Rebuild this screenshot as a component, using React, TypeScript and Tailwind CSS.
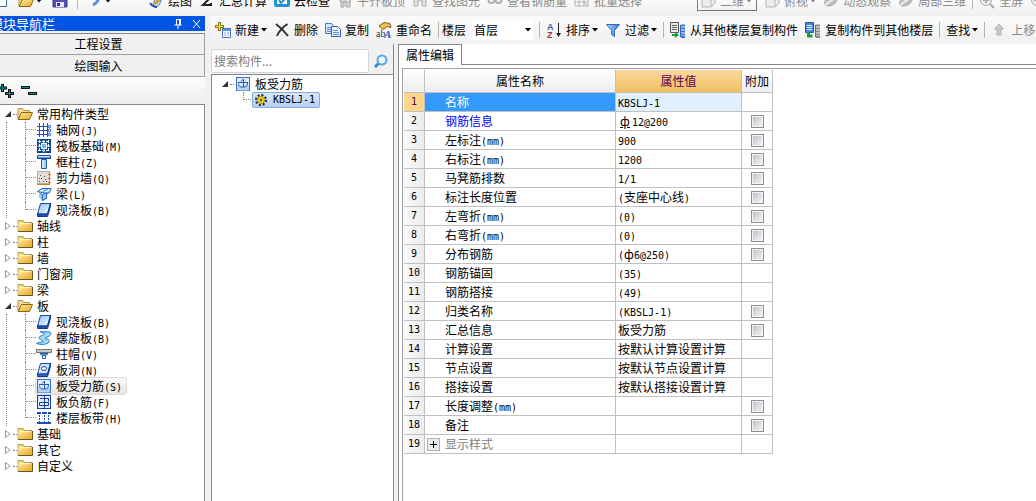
import React from "react";
import clsx from "clsx";

const ICONS: Record<string, React.ReactNode> = {
    folder: (
        <>
            <path d="M1 13.5V2.5h5l1 2h8v9z" fill="#f7d774" stroke="#c09c48" />
            <path d="M1.500 6h13v7h-13z" fill="url(#folderFill)" />
            <path d="M2 5.500h12" stroke="#fff3c0" />
            <path d="M1 13.500h14.500V5" fill="none" stroke="#6d5420" />
        </>
    ),
    folderOpen: (
        <>
            <path d="M1 13V2.500h4.500l1 2h6V7" fill="#f4dc94" stroke="#b8923e" />
            <path d="M1 13.500 4.500 6.500h11l-3 7z" fill="url(#folderFill)" stroke="#8a6418" />
        </>
    ),
    axis: (
        <>
            <path d="M3.500 1v14M7.500 1v14M11.500 1v14M1 4.500h13M1 8.500h13M1 12.500h13" stroke="#1f4fc0" fill="none" />
            <g fill="#fff" stroke="#1f4fc0">
                <circle cx="13.500" cy="4.500" r="1.300" />
                <circle cx="13.500" cy="8.500" r="1.300" />
                <circle cx="13.500" cy="12.500" r="1.300" />
            </g>
        </>
    ),
    raft: (
        <>
            <rect x="1" y="1" width="14" height="14" fill="#0b4a94" />
            <path d="M3.500 2v12M12.500 2v12M2 3.500h12M2 12.500h12" stroke="#fff" strokeDasharray="3 1" />
            <rect x="5.500" y="5.500" width="5" height="5" fill="#7db4ec" stroke="#fff" />
            <path d="M8 2v3M8 11v3M2 8h3M11 8h3" stroke="#fff" />
        </>
    ),
    column: (
        <>
            <path d="M1.500 1.500h13v3h-13z" fill="#5790dc" stroke="#1d4690" />
            <path d="M2 2.500h12" stroke="#d4e7fb" />
            <path d="M5.500 5.500h5v9h-5z" fill="#a5cbf5" stroke="#2158ad" />
            <path d="M7 6v8" stroke="#fff" />
        </>
    ),
    shearWall: (
        <>
            <rect x="1.500" y="1.500" width="12" height="12" fill="#e4dedb" stroke="#b8aca6" />
            <path d="M3 11.500h1M5 8.500h1M7 11.500h1M9 9.500h1M4 5.500h1M8 6.500h1M10 11.500h1M3 8.500h1" stroke="#555" />
            <path d="M1 14.500h13M13.500 2v12M12 4.500h3M12 8.500h3M12 12.500h3" stroke="#d9792b" />
        </>
    ),
    beam: (
        <>
            <path d="M1.500 5.500 6 2.500h9l-1 3-3.500 2z" fill="#d4eafd" stroke="#2468b8" />
            <path d="M6.500 8.500 10.500 6.500v6l-4 2z" fill="#8cc0f2" stroke="#2468b8" />
            <path d="m2 5.500 4 3v5l-2-2V8M7 5.500l5-2.500M11 8l3-2" fill="none" stroke="#3f88d4" />
        </>
    ),
    slab: (
        <>
            <path d="M4.500 1.500h10l-3 10.500h-10z" fill="url(#slabFill)" stroke="#1746a8" />
            <path d="M1.500 12v2.500h10l3-10v-3l-3 10.500z" fill="#1b52bd" stroke="#123c92" />
        </>
    ),
    spiral: (
        <path
            d="M4 1.500c3 1 7-.500 10 .500 2 2 0 4-3 5-3 1-3 1.500 0 2 3 .800 3 3 0 4.500-3 1.500-7 1-10.500 0C2 12 5 13 7 11.500c1-1-3-1.500-4-3.500-.500-2 4-2 5.500-4C8.500 3 6 3 4 1.500z"
            fill="#a4daf6"
            stroke="#1f7cc4"
        />
    ),
    cap: (
        <>
            <path d="M.500 3.500h15v3H.500z" fill="#c9c9c9" stroke="#777" />
            <path d="M4 7.500h8l-2 2H6z" fill="#6ca4e8" stroke="#1d55a8" />
            <path d="M6.500 9.500h3v3h-3z" fill="#fff" stroke="#1d55a8" />
        </>
    ),
    hole: (
        <>
            <path d="M4.500 1.500h10l-3 10.500h-10z" fill="#cfe6fc" stroke="#1746a8" />
            <path d="M1.500 12v2.500h10l3-10v-3l-3 10.500z" fill="#2a66cf" stroke="#123c92" />
            <ellipse cx="8" cy="6.500" rx="2.500" ry="2" fill="#fff" stroke="#1746a8" />
        </>
    ),
    rebar: (
        <>
            <rect x="1.500" y="1.500" width="13" height="13" fill="#dcecfc" stroke="#3c6cc0" />
            <path d="M2 9.500h12v5H2z" fill="#b4d2f4" />
            <path d="M3 6.500h10M8.500 3v8c-3 1-5-1-5-3.500M6 5.500l2.500-2.500M12.500 7c0 3-1.500 4-4 4" fill="none" stroke="#2458b4" />
        </>
    ),
    negRebar: (
        <>
            <rect x="1.500" y="1.500" width="13" height="13" fill="#dcecfc" stroke="#1b3f9c" />
            <path d="M8.500 2v12M4 4.500h8.500v3M3.500 8.500h9v3h-9z" stroke="#1b3f9c" fill="none" />
        </>
    ),
    strip: (
        <>
            <path d="M1 3h4M6 3h5M12 3h3M1 13h14" stroke="#1b4fb8" strokeWidth="2" />
            <path d="M3.500 5v7M8.500 5v7M12.500 5v7" stroke="#1b4fb8" strokeDasharray="2 1" />
        </>
    ),
    gear: (
        <>
            <circle cx="8" cy="8" r="5" fill="none" stroke="#222" strokeWidth="2" strokeDasharray="2 1.900" />
            <circle cx="8" cy="8" r="3.500" fill="#f8e21c" stroke="#a08c00" />
            <circle cx="8" cy="8" r="1" fill="#fff" stroke="#333" />
        </>
    ),
    add: (
        <>
            <path d="M4.500 0v9M0 4.500h9" stroke="#8c7a18" strokeWidth="3" />
            <path d="M4.500 1v7M1 4.500h7" stroke="#ffe34a" />
            <path d="M7.500 6.500h8v9h-8z" fill="#fff" stroke="#4575c8" />
            <path d="M8 8h7" stroke="#5c94e8" strokeWidth="2" />
            <path d="M9 11h2M12 11h2M9 13h2M12 13h2" stroke="#7ca6e6" />
        </>
    ),
    remove: <path d="M2 2c4 3 8 7 12 12M13.500 2C9 5 5 9 3 14" fill="none" stroke="#333" strokeWidth="2" />,
    copy: (
        <>
            <path d="M.500 1.500h6l2 2v8h-8z" fill="#d6e6fb" stroke="#4a78c8" />
            <path d="M2 5.500h5M2 7.500h5M2 9.500h4" stroke="#5b8be0" />
            <path d="M6.500 4.500h6l3 3v7h-9z" fill="#eef5ff" stroke="#365fae" />
            <path d="M8 8.500h5M8 10.500h6M8 12.500h6" stroke="#5b8be0" />
        </>
    ),
    rename: (
        <>
            <path d="m3 4 5-3.500 6 1 1 4-4-1-4 3z" fill="#f0c34c" stroke="#7a6128" />
            <text x="0" y="15" fontSize="10" fill="#333" fontFamily="Liberation Serif, serif">ab</text>
            <text x="8" y="15.500" fontSize="11" fontWeight="bold" fontStyle="italic" fill="#2c5fb8" fontFamily="Liberation Serif, serif">A</text>
        </>
    ),
    sort: (
        <>
            <text x="1" y="7.500" fontSize="9" fontWeight="bold" fill="#2f5fb0" fontFamily="Liberation Sans, sans-serif">A</text>
            <text x="1" y="15.500" fontSize="9" fontWeight="bold" fill="#a03030" fontFamily="Liberation Sans, sans-serif">Z</text>
            <path d="M12.500 1v12" stroke="#222" />
            <path d="M10 11h5l-2.500 4z" fill="#222" />
        </>
    ),
    filter: <path d="M1.500 2.500h13L9.500 8.500v6l-3-2v-4z" fill="url(#funnelFill)" stroke="#2f68bc" />,
    copyFrom: (
        <>
            <path d="M.500.500h8v10h-8z" fill="#e8e8e8" stroke="#555" />
            <path d="M2 3.500h5M2 5.500h5M2 7.500h5" stroke="#666" />
            <path d="M10.500 3v12" stroke="#2c68c0" />
            <path d="M11 3.500h4M11 6.500h4M11 9.500h4M11 12.500h4M11 15h4" stroke="#3c78cc" strokeWidth="2" />
            <path d="M2 12h3v-2l4 3-4 3v-2H2z" fill="#1c9c38" />
        </>
    ),
    copyTo: (
        <>
            <path d="M.500.500h8v10h-8z" fill="#4f86dc" stroke="#2c55a0" />
            <path d="M2 3.500h5M2 5.500h5M2 7.500h5" stroke="#dce9fb" />
            <path d="M10.500 3v12" stroke="#666" />
            <path d="M11 3.500h4M11 6.500h4M11 9.500h4M11 12.500h4M11 15h4" stroke="#8a8a8a" strokeWidth="2" />
            <path d="M3.500 10v4h4" fill="none" stroke="#1c9c38" strokeWidth="3" />
        </>
    ),
    up: <path d="M8 2 3.500 7H6v6h4V7h2.500z" fill="#c8c8c8" stroke="#b0b0b0" />,
    page: <path d="M1.500 1.500h13v12h-13z" fill="#fff" stroke="#3c6c9c" />,
    save: (
        <>
            <path d="M1 1h14v13H1z" fill="#4f4fb4" stroke="#34348c" />
            <path d="M4 9h8v5H4z" fill="#e6e6f6" />
            <path d="M5 10h3v3H5z" fill="#34348c" />
        </>
    ),
    undo: <path d="M12 2c0 4-2 8-6 10" fill="none" stroke="#5b92e4" strokeWidth="3" />,
    brush: (
        <>
            <path d="M3 4c3 0 4 3 3 5s-1 4 2 5c4-1 4-5 6-9" fill="#c6e0f8" stroke="#3b6cae" />
            <path d="M7 11 14 3" stroke="#d39a2c" strokeWidth="3" />
            <path d="M2 10c2 3 4 4 7 4" stroke="#1f4fa0" strokeWidth="2" fill="none" />
        </>
    ),
    sum: <path d="M12 4V2H4l5 5-5 5h8v-2" fill="none" stroke="#222" strokeWidth="2" />,
    cloud: (
        <>
            <rect x="0" y="0" width="16" height="14" rx="2" fill="#2296d4" />
            <path d="M3 3h10v8H3z" fill="#fff" />
            <path d="m5 7 2 3 5-5" fill="none" stroke="#2296d4" strokeWidth="2" />
        </>
    ),
    align: <path d="M3 3h10v6H3zM4 9v5h3V9M9 7v7h4V7" fill="#d4d4d4" stroke="#a6a6a6" />,
    binoculars: <path d="M2 5h4v8H2zM10 5h4v8h-4zM6 8h4" fill="#e0e0e0" stroke="#b0b0b0" />,
    glasses: (
        <g fill="none" stroke="#b0b0b0" strokeWidth="2">
            <circle cx="4.500" cy="7" r="3" />
            <circle cx="11.500" cy="7" r="3" />
        </g>
    ),
    gridPick: <path d="M1 3h13v10H1zM1 9h13M5 3v10M10 3v10M9 8l5 6" fill="none" stroke="#b4b4b4" />,
    cube: <path d="M2 6 6 2h9v8l-4 4H2zM2 6h9v8M11 6l4-4" fill="#ececec" stroke="#b4b4b4" />,
    orbit: (
        <>
            <ellipse cx="8" cy="8" rx="7" ry="4" fill="#c0c0c0" stroke="#aaa" transform="rotate(-30 8 8)" />
            <path d="M2 12 13 4" stroke="#eee" strokeWidth="2" />
        </>
    ),
    magnify: (
        <>
            <circle cx="7" cy="7" r="5.500" fill="#eee" stroke="#aaa" />
            <path d="M4 7h6M7 4v6M11 11l4 4" stroke="#aaa" strokeWidth="2" />
        </>
    ),
};

function Icon({name, className}: { name: string, className?: string }) {
    return (
        <svg viewBox="0 0 16 16" className={clsx("size-4 shrink-0", className)} aria-hidden="true">
            {ICONS[name]}
        </svg>
    )
}

function Caret() {
    return (
        <svg viewBox="0 0 6 4" className="ml-[-2px] h-1 w-1.5 shrink-0" aria-hidden="true">
            <path d="M0 0h6L3 3.500z" fill="currentColor" />
        </svg>
    )
}

// CJK glyphs stay at 12px, latin runs get the half-width mono face
function Mixed({text}: { text: string }) {
    return (
        <>
            {text.split(/([\x21-\x7e]+)/).map((part, i) =>
                i % 2 ? <span key={i} className="font-['DejaVu_Sans_Mono',monospace] text-[10px] leading-none">{part}</span> : part
            )}
        </>
    )
}

function ToolButton({icon, label, caret, disabled}: { icon?: string, label?: string, caret?: boolean, disabled?: boolean }) {
    return (
        <button
            type="button"
            disabled={disabled}
            aria-label={label ?? icon}
            className="flex shrink-0 items-center gap-1 whitespace-nowrap text-black disabled:text-[#8a8a8a]"
        >
            {icon && <Icon name={icon} />}
            {label}
            {caret && <Caret />}
        </button>
    )
}

function Separator() {
    return <span className="-mx-px h-4 w-px shrink-0 bg-[#b4b4b4]" />
}

function TopBar() {
    return (
        <header className="h-4 overflow-hidden bg-linear-to-b from-[#fafafa] to-[#efefef]">
            <div className="-mt-[11px] flex h-6 items-center">
                <div className="flex w-[148px] shrink-0 items-center gap-2.5">
                    <Icon name="page" className="-ml-2" />
                    <ToolButton icon="folderOpen" caret />
                    <ToolButton icon="save" />
                    <Separator />
                    <ToolButton icon="undo" caret />
                </div>
                <div className="flex items-center gap-[7px]">
                    <ToolButton icon="brush" label="绘图" />
                    <ToolButton icon="sum" label="汇总计算" />
                    <ToolButton icon="cloud" label="云检查" />
                    <ToolButton icon="align" label="平齐板顶" disabled />
                    <ToolButton icon="binoculars" label="查找图元" disabled />
                    <ToolButton icon="glasses" label="查看钢筋量" disabled />
                    <ToolButton icon="gridPick" label="批量选择" disabled />
                    <div className="ml-12 flex h-5 w-[60px] shrink-0 items-center border border-[#777] px-0.5">
                        <ToolButton icon="cube" label="二维" caret disabled />
                    </div>
                    <ToolButton icon="cube" label="俯视" caret disabled />
                    <ToolButton icon="orbit" label="动态观察" disabled />
                    <ToolButton icon="orbit" label="局部三维" disabled />
                    <Separator />
                    <ToolButton icon="magnify" label="全屏" disabled />
                    <ToolButton icon="magnify" disabled />
                </div>
            </div>
        </header>
    )
}

function ComponentToolbar() {
    return (
        <div className="flex h-7 items-center gap-[7px] overflow-hidden bg-linear-to-b from-[#fafafa] to-[#f0f0f0] pl-1">
            <ToolButton icon="add" label="新建" caret />
            <ToolButton icon="remove" label="删除" />
            <ToolButton icon="copy" label="复制" />
            <ToolButton icon="rename" label="重命名" />
            <div className="flex shrink-0 items-center gap-1">
                <Separator />
                <label htmlFor="floor">楼层</label>
            </div>
            <div className="relative flex shrink-0 items-center">
                <select id="floor" className="h-5 w-[60px] appearance-none bg-white pl-px text-[12px]">
                    <option>首层</option>
                </select>
                <span className="pointer-events-none absolute right-0.5"><Caret /></span>
            </div>
            <Separator />
            <ToolButton icon="sort" label="排序" caret />
            <ToolButton icon="filter" label="过滤" caret />
            <Separator />
            <ToolButton icon="copyFrom" label="从其他楼层复制构件" />
            <ToolButton icon="copyTo" label="复制构件到其他楼层" />
            <Separator />
            <ToolButton label="查找" caret />
            <Separator />
            <ToolButton icon="up" label="上移" disabled />
        </div>
    )
}

type TreeNode = {
    label: string
    icon?: string
    active?: boolean
    children?: TreeNode[]
}

const MODULES: TreeNode[] = [
    {
        label: "常用构件类型",
        children: [
            {label: "轴网(J)", icon: "axis"},
            {label: "筏板基础(M)", icon: "raft"},
            {label: "框柱(Z)", icon: "column"},
            {label: "剪力墙(Q)", icon: "shearWall"},
            {label: "梁(L)", icon: "beam"},
            {label: "现浇板(B)", icon: "slab"},
        ],
    },
    {label: "轴线"},
    {label: "柱"},
    {label: "墙"},
    {label: "门窗洞"},
    {label: "梁"},
    {
        label: "板",
        children: [
            {label: "现浇板(B)", icon: "slab"},
            {label: "螺旋板(B)", icon: "spiral"},
            {label: "柱帽(V)", icon: "cap"},
            {label: "板洞(N)", icon: "hole"},
            {label: "板受力筋(S)", icon: "rebar", active: true},
            {label: "板负筋(F)", icon: "negRebar"},
            {label: "楼层板带(H)", icon: "strip"},
        ],
    },
    {label: "基础"},
    {label: "其它"},
    {label: "自定义"},
]

function Arrow({open}: { open?: boolean }) {
    return (
        <svg viewBox="0 0 8 8" className="size-2 shrink-0" aria-hidden="true">
            {open
                ? <path d="M7 1v6H1z" fill="#333" />
                : <path d="M1.500.500 6 4 1.500 7.500z" fill="#fff" stroke="#999" />}
        </svg>
    )
}

function ModuleTree() {
    return (
        <ul className="pt-px">
            {MODULES.map((node, i) => (
                <li key={i}>
                    <div className="flex h-4 items-center">
                        <Arrow open={!!node.children} />
                        <span className="mx-px w-1 border-t border-dotted border-[#888]" />
                        <Icon name={node.children ? "folderOpen" : "folder"} className="-ml-px" />
                        <span className="ml-1">{node.label}</span>
                    </div>
                    {node.children && (
                        <ul className="ml-0.5 border-l border-dotted border-[#888] pl-[18px]">
                            {node.children.map((child, j) => (
                                <li key={j} className="flex h-4 items-center">
                                    <span
                                        className={clsx(
                                            "w-[11px] self-stretch border-l border-dotted border-[#888]",
                                            j === node.children!.length - 1 && "mb-2"
                                        )}
                                    >
                                        <span className="block h-2 border-b border-dotted border-[#888]" />
                                    </span>
                                    <span
                                        className={clsx(
                                            "flex h-4 items-center gap-1 pr-1",
                                            child.active && "rounded-xs bg-linear-to-b from-[#fafafa] to-[#e6e6e6] outline outline-[#dadada]"
                                        )}
                                    >
                                        <Icon name={child.icon!} />
                                        <span><Mixed text={child.label} /></span>
                                    </span>
                                </li>
                            ))}
                        </ul>
                    )}
                </li>
            ))}
        </ul>
    )
}

function Sidebar() {
    return (
        <aside className="-ml-2 flex w-[213px] shrink-0 flex-col">
            <div className="flex h-[15px] items-center bg-[#0054e3] text-[13px] text-white">
                <span className="-ml-0.5 flex-1 whitespace-nowrap">模块导航栏</span>
                <svg viewBox="0 0 30 10" className="mr-1 h-2.5 w-[30px]" fill="none" stroke="#fff" aria-hidden="true">
                    <path d="M5 .500h4M5.500 0v6M8.500 0v6M3.500 6h7M7 6v4M9.500 0v6" />
                    <path d="m22 1 7 8M29 1l-7 8" />
                </svg>
            </div>
            <div className="flex flex-col pt-0.5">
                <button type="button" className="h-[22px] border border-[#a0a0a0] border-t-[#888] bg-[#f0f0f0]">工程设置</button>
                <button type="button" className="h-[22px] border border-t-0 border-[#a0a0a0] bg-[#f0f0f0]">绘图输入</button>
            </div>
            <div className="flex h-[27px] items-center bg-linear-to-b from-[#fdfdfd] to-[#ededed] pl-2">
                <svg viewBox="0 0 40 16" className="h-4 w-10" fill="none" aria-hidden="true">
                    <path d="M2.500 1v8M-2 5h9M9.500 6v9M5 10.500h9M21 4.500h9M28 10.500h9" stroke="#111" strokeWidth="3" />
                    <path d="M2.500 2v6M-1 5h7M9.500 7v7M6 10.500h7M22 4.500h7M29 10.500h7" stroke="#0c8f8c" />
                </svg>
            </div>
            <nav className="flex-1 border-t border-r border-[#828790] bg-white pl-3">
                <ModuleTree />
            </nav>
        </aside>
    )
}

function ComponentPanel() {
    return (
        <section className="flex w-[183px] shrink-0 flex-col border-r border-[#828790]">
            <div className="flex h-[30px] items-end pb-px">
                <input
                    type="text"
                    aria-label="搜索构件"
                    placeholder="搜索构件..."
                    className="h-6 min-w-0 flex-1 rounded-xs border border-[#d4d4dc] bg-white px-0.5 pb-0.5 text-[12px] placeholder:text-[#808080]"
                />
                <button type="button" aria-label="搜索" className="flex h-6 w-6 items-center justify-center">
                    <svg viewBox="0 0 16 16" className="size-4" fill="none" aria-hidden="true">
                        <path d="m6 10-4 4" stroke="#3a86c4" strokeWidth="3" />
                        <circle cx="9" cy="7" r="4.500" fill="#eaf6ff" stroke="#5aa8e0" strokeWidth="2" />
                    </svg>
                </button>
            </div>
            <div className="flex-1 border-t border-l border-[#828790] bg-white pt-px pl-[9px]">
                <div className="flex h-4 items-center">
                    <Arrow open />
                    <span className="mx-px w-1 border-t border-dotted border-[#888]" />
                    <Icon name="rebar" />
                    <span className="ml-1">板受力筋</span>
                </div>
                <div className="flex h-4 items-center pl-[22px]">
                    <span className="h-2 w-2 self-start border-b border-l border-dotted border-[#888]" />
                    <button type="button" className="ml-px flex h-4 items-center gap-1 rounded-xs border border-[#84acdd] bg-linear-to-b from-[#d9e8fb] to-[#b4d0f3] pr-1">
                        <Icon name="gear" />
                        <Mixed text="KBSLJ-1" />
                    </button>
                </div>
            </div>
        </section>
    )
}

type Row = {
    name: string
    value?: React.ReactNode
    check?: boolean
}

const ROWS: Row[] = [
    {name: "名称", value: <Mixed text="KBSLJ-1" />},
    {name: "钢筋信息", value: <><span className="inline-block w-3.5 text-center underline">ф</span><Mixed text="12@200" /></>, check: true},
    {name: "左标注(mm)", value: <Mixed text="900" />, check: true},
    {name: "右标注(mm)", value: <Mixed text="1200" />, check: true},
    {name: "马凳筋排数", value: <Mixed text="1/1" />, check: true},
    {name: "标注长度位置", value: <Mixed text="(支座中心线)" />, check: true},
    {name: "左弯折(mm)", value: <Mixed text="(0)" />, check: true},
    {name: "右弯折(mm)", value: <Mixed text="(0)" />, check: true},
    {name: "分布钢筋", value: <Mixed text="(ф6@250)" />, check: true},
    {name: "钢筋锚固", value: <Mixed text="(35)" />},
    {name: "钢筋搭接", value: <Mixed text="(49)" />},
    {name: "归类名称", value: <Mixed text="(KBSLJ-1)" />, check: true},
    {name: "汇总信息", value: "板受力筋", check: true},
    {name: "计算设置", value: "按默认计算设置计算"},
    {name: "节点设置", value: "按默认节点设置计算"},
    {name: "搭接设置", value: "按默认搭接设置计算"},
    {name: "长度调整(mm)", check: true},
    {name: "备注", check: true},
    {name: "显示样式"},
]

function PropertyTable() {
    return (
        <table className="w-[369px] table-fixed border-separate border-spacing-0 [&_td]:border-r [&_td]:border-b [&_td]:border-[#c0c0c0] [&_td]:p-0 [&_th]:border-r [&_th]:border-b [&_th]:border-[#c0c0c0] [&_th]:p-0 [&_th]:font-normal">
            <colgroup>
                <col className="w-[21px]" />
                <col className="w-[191px]" />
                <col className="w-[126px]" />
                <col className="w-[31px]" />
            </colgroup>
            <thead>
                <tr className="h-[23px] bg-linear-to-b from-white to-[#ececec]">
                    <th />
                    <th>属性名称</th>
                    <th className="bg-linear-to-b from-[#f9d99e] to-[#f0c060] text-[#5c0050]">属性值</th>
                    <th>附加</th>
                </tr>
            </thead>
            <tbody>
                {ROWS.map((row, i) => (
                    <tr key={i} className="h-[19px] leading-[18px]">
                        <th className={clsx("font-['DejaVu_Sans_Mono',monospace] text-[10px]", i === 0 ? "bg-[#ffd58c] text-[#5c0050]" : "bg-linear-to-r from-[#fafafa] to-[#ececec]")}>
                            {i + 1}
                        </th>
                        <td className={clsx(i === 0 && "bg-[#3399ff] text-white", i === 1 && "text-[#0000ff]", i === 18 && "text-[#808080]")}>
                            <div className="flex h-[18px] items-center">
                                <span className="flex w-5 shrink-0 pl-0.5">
                                    {i === 18 && (
                                        <button type="button" aria-label="展开" className="flex size-[13px] items-center justify-center border border-[#b0b0b0] bg-[#e8ebef]">
                                            <svg viewBox="0 0 9 9" className="size-[9px]" aria-hidden="true">
                                                <path d="M4.500 1v7M1 4.500h7" stroke="#000" />
                                            </svg>
                                        </button>
                                    )}
                                </span>
                                <span><Mixed text={row.name} /></span>
                            </div>
                        </td>
                        <td className={clsx(i === 0 && "bg-[#e0f0ff]")}>
                            <div className="h-[18px] pl-0.5">{row.value}</div>
                        </td>
                        <td>
                            {row.check && (
                                <input
                                    type="checkbox"
                                    aria-label={row.name}
                                    className="mx-auto block size-[13px] appearance-none border border-[#8e8f8f] bg-linear-to-br from-[#b8bec8] to-[#fafafa] shadow-[inset_0_0_0_1px_#f4f4f4]"
                                />
                            )}
                        </td>
                    </tr>
                ))}
            </tbody>
        </table>
    )
}

function PropertyPanel() {
    return (
        <section className="ml-1 flex min-w-0 flex-1 flex-col">
            <div className="flex h-[21px] bg-white">
                <div role="tab" aria-selected="true" className="flex w-16 items-center justify-center border-t border-r border-l border-[#828790]">
                    属性编辑
                </div>
                <div className="flex-1 border-b border-[#828790]" />
            </div>
            <div className="flex flex-1 flex-col border-l border-[#828790] bg-white pt-[3px] pl-[3px]">
                <div className="flex-1 border-t border-l border-[#a0a0a8] pt-px pl-px">
                    <PropertyTable />
                </div>
            </div>
        </section>
    )
}

export default function App() {
    return (
        <div className="flex min-h-screen flex-col overflow-hidden bg-[#f0f0f0] font-['Noto_Sans_CJK_SC',sans-serif] text-[12px] leading-4 text-black">
            <svg className="absolute size-0" aria-hidden="true">
                <defs>
                    <linearGradient id="folderFill" x1="0" y1="0" x2="1" y2="1">
                        <stop offset="0" stopColor="#fdeaa0" />
                        <stop offset="1" stopColor="#e8a820" />
                    </linearGradient>
                    <linearGradient id="slabFill" x1="0" y1="0" x2="1" y2="1">
                        <stop offset="0" stopColor="#8cc0f8" />
                        <stop offset="1" stopColor="#f4faff" />
                    </linearGradient>
                    <linearGradient id="funnelFill" x1="0" y1="0" x2="1" y2="0">
                        <stop offset="0" stopColor="#b8d8fa" />
                        <stop offset="1" stopColor="#2f74d0" />
                    </linearGradient>
                </defs>
            </svg>
            <TopBar />
            <div className="flex flex-1">
                <Sidebar />
                <main className="ml-1.5 flex min-w-0 flex-1 flex-col">
                    <ComponentToolbar />
                    <div className="flex flex-1">
                        <ComponentPanel />
                        <PropertyPanel />
                    </div>
                </main>
            </div>
        </div>
    )
}
